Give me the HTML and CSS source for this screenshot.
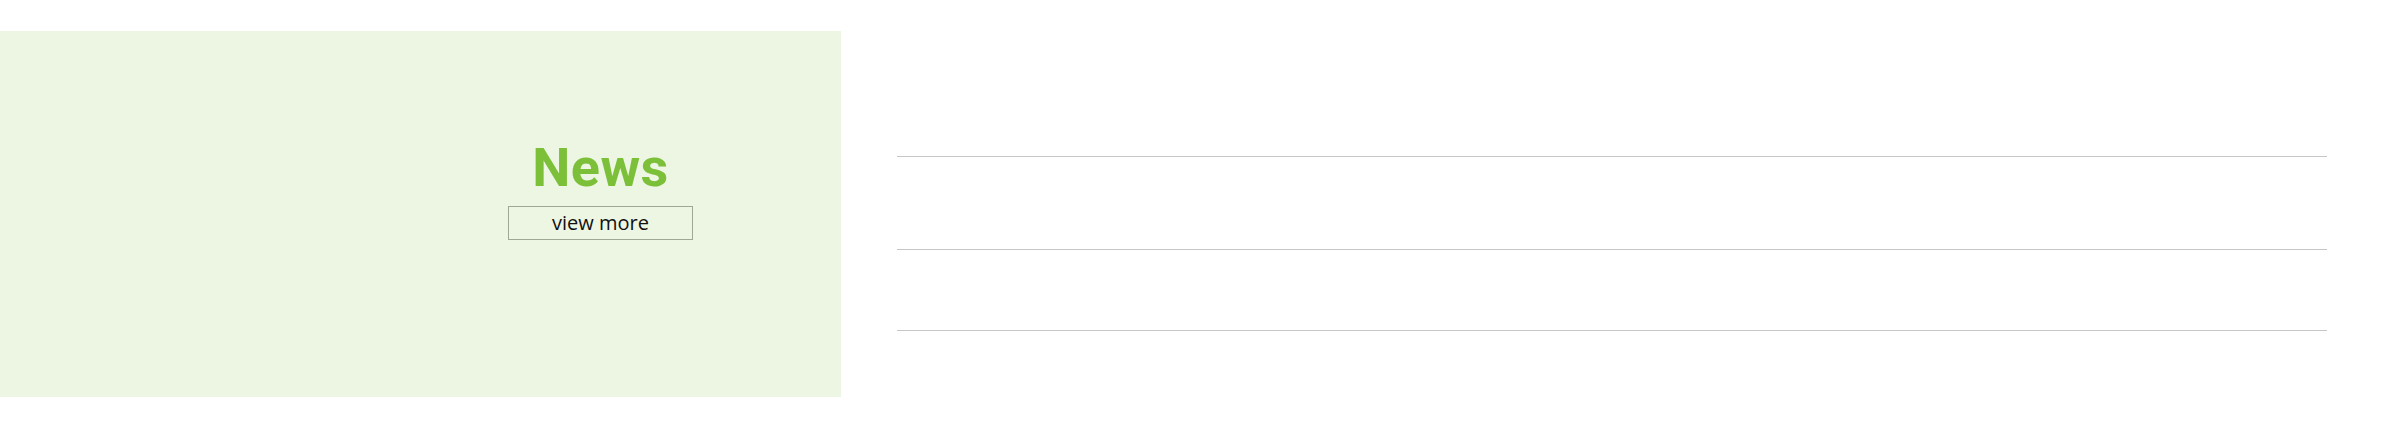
FILE: index.html
```html
<!DOCTYPE html>
<html lang="en">
<head>
<meta charset="utf-8">
<title>News</title>
<link rel="stylesheet" href="styles.css">
</head>
<body>
<section class="news">
  <div class="news-panel">
    <div class="news-head">
      <h2 class="news-title">News</h2>
      <a class="news-more" href="#">view more</a>
    </div>
  </div>
  <ul class="news-list">
    <li class="news-item item-1"></li>
    <li class="news-item item-2"></li>
    <li class="news-item item-3"></li>
  </ul>
</section>
</body>
</html>
```
FILE: styles.css
```css
html, body {
  margin: 0;
  padding: 0;
  background: #ffffff;
}
body {
  font-family: "Open Sans", "Liberation Sans", sans-serif;
}
.news {
  display: flex;
  align-items: flex-start;
  padding-top: 31px;
}
.news-panel {
  width: 841px;
  height: 366px;
  flex: none;
  background: #edf5e3;
  box-sizing: border-box;
  padding-top: 110px;
  padding-left: 508px;
}
.news-head {
  width: 185px;
  display: flex;
  flex-direction: column;
  align-items: center;
}
.news-title {
  margin: 0;
  font-family: "Roboto", "Liberation Sans", sans-serif;
  font-weight: 700;
  font-size: 54px;
  line-height: 54px;
  color: #7cc03a;
  letter-spacing: 0.5px;
}
.news-more {
  margin-top: 11px;
  width: 185px;
  height: 34px;
  box-sizing: border-box;
  border: 1px solid #9ea897;
  font-size: 20px;
  line-height: 32px;
  text-align: center;
  color: #111111;
  text-decoration: none;
}
.news-list {
  list-style: none;
  margin: 0 0 0 56px;
  padding: 0;
  width: 1430px;
}
.news-item {
  border-bottom: 1px solid #c6c6c6;
}
.item-1 { height: 125px; }
.item-2 { height: 92px; }
.item-3 { height: 80px; }
```
